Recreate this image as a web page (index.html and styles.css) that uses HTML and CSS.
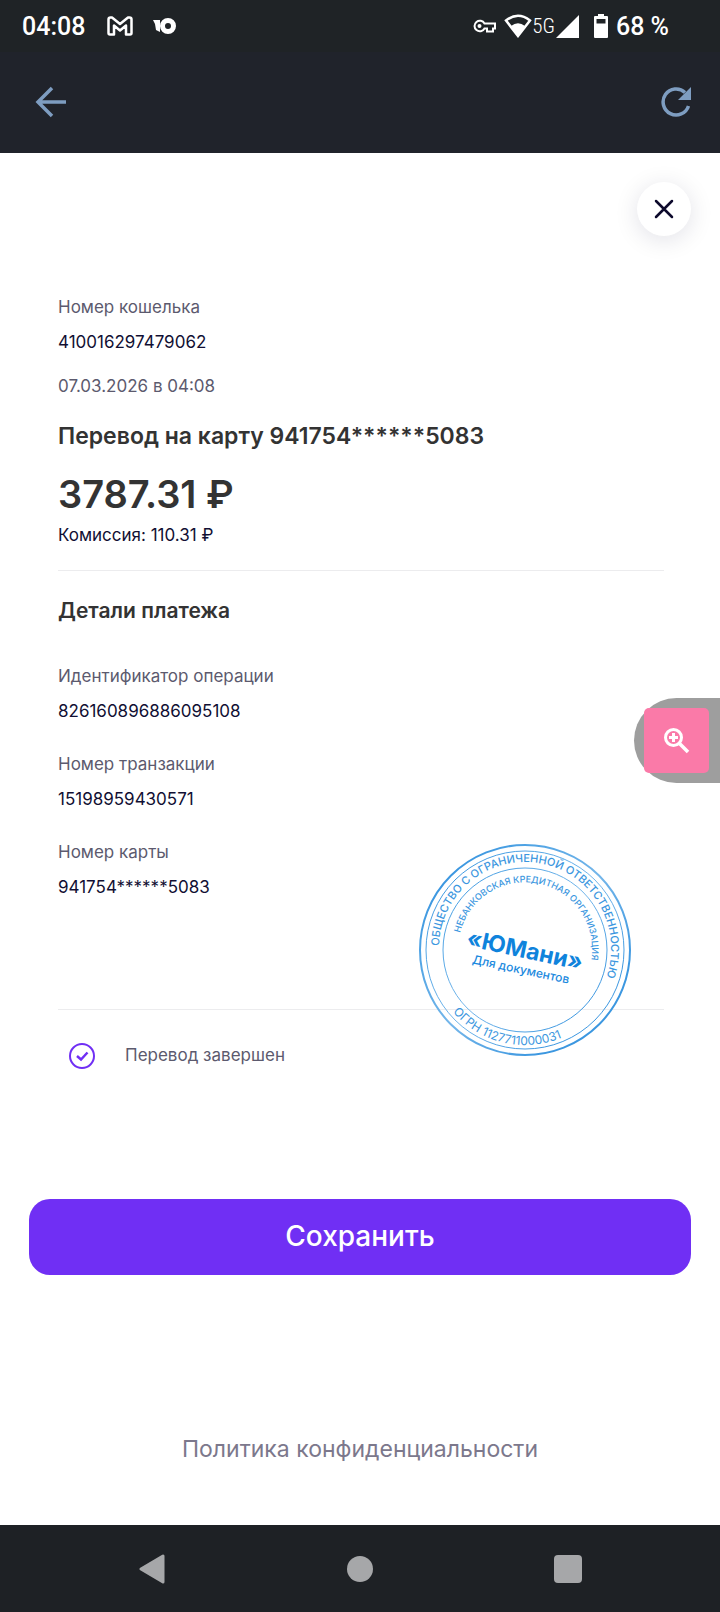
FILE: index.html
```
<!DOCTYPE html>
<html lang="ru">

<head>
    <meta charset="utf-8">
    <meta name="viewport" content="width=device-width, initial-scale=1">
    <title>Перевод на карту</title>
    <link rel="stylesheet" href="styles.css">
</head>

<body>

    <div class="status-bar">
        <span class="time">04:08</span>
        <svg class="icon-mail" width="26" height="20" viewBox="0 0 26 20">
            <path d="M1.500 17V3.500Q1.500 1.500 3.500 1.500H5L13 8L21 1.500H22.500Q24.500 1.500 24.500 3.500V17Q24.500 18.500 23 18.500H19V9.500L13 14.500L7 9.500V18.500H3Q1.500 18.500 1.500 17Z" fill="none" stroke="#fff" stroke-width="2.500" stroke-linejoin="round" />
        </svg>
        <svg class="icon-yoo" width="24" height="16" viewBox="0 0 24 16">
            <path d="M0 2H7V14L3 12L2 6Z" fill="#fff" />
            <circle cx="15" cy="8" r="5.500" fill="none" stroke="#fff" stroke-width="5" />
        </svg>
        <div class="status-right">
            <svg width="23" height="14" viewBox="0 0 23 14">
                <path d="M11.500 4.500A5.300 5.300 0 1 0 11.500 9.500H14V12.500H20V9.500H22V4.500Z" fill="none" stroke="#fff" stroke-width="2" />
                <circle cx="6.500" cy="7" r="2" fill="#fff" />
            </svg>
            <svg class="icon-wifi" width="28" height="24" viewBox="0 0 28 24">
                <path d="M2 6.500Q14 -3 26 6.500L14 22Z" fill="none" stroke="#fff" stroke-width="2.500" />
                <path d="M7 12Q14 6.500 21 12L14 22Z" fill="#fff" />
            </svg>
            <span class="network">5G</span>
            <svg class="icon-signal" width="23" height="23" viewBox="0 0 23 23">
                <path d="M0 23L23 0V23Z" fill="#fff" />
            </svg>
            <svg class="icon-battery" width="14" height="24" viewBox="0 0 14 24">
                <path fill-rule="evenodd" d="M4 0H10V2H13Q14 2 14 3V23Q14 24 13 24H1Q0 24 0 23V3Q0 2 1 2H4ZM2.500 5V9.500H11.500V5Z" fill="#fff" />
            </svg>
            <span class="percent">68 %</span>
        </div>
    </div>

    <header class="app-bar">
        <button type="button" class="bar-button" aria-label="Назад">
            <svg width="32" height="32" viewBox="0 0 32 32">
                <path d="M17 2L3 16L17 30M3 16H31" fill="none" stroke="#7e9dc1" stroke-width="3.500" />
            </svg>
        </button>
        <button type="button" class="bar-button" aria-label="Обновить">
            <svg width="30" height="30" viewBox="0 0 30 30">
                <path d="M27.500 19A13 13 0 1 1 24 5.500" fill="none" stroke="#7e9dc1" stroke-width="3.500" />
                <path d="M30 0V13H17Z" fill="#7e9dc1" />
            </svg>
        </button>
    </header>

    <main>
        <div class="close-row">
            <button type="button" class="close" aria-label="Закрыть">
                <svg width="20" height="20" viewBox="0 0 20 20">
                    <path d="M2 2L18 18M18 2L2 18" stroke="#0d0a2c" stroke-width="2.500" stroke-linecap="round" />
                </svg>
            </button>
        </div>

        <section class="receipt">
            <p class="label">Номер кошелька</p>
            <p class="value">410016297479062</p>
            <p class="label date">07.03.2026 в 04:08</p>
            <h1>Перевод на карту 941754******5083</h1>
            <p class="amount">3787.31 ₽</p>
            <p class="value">Комиссия: 110.31 ₽</p>

            <div class="details">
                <h2>Детали платежа</h2>
                <dl>
                    <div>
                        <dt class="label">Идентификатор операции</dt>
                        <dd class="value">826160896886095108</dd>
                    </div>
                    <div>
                        <dt class="label">Номер транзакции</dt>
                        <dd class="value">15198959430571</dd>
                    </div>
                    <div>
                        <dt class="label">Номер карты</dt>
                        <dd class="value">941754******5083</dd>
                    </div>
                </dl>

                <svg class="stamp" width="214" height="214" viewBox="-107 -107 214 214">
                    <defs>
                        <linearGradient id="ink" gradientUnits="userSpaceOnUse" x1="-75" y1="-75" x2="75" y2="75">
                            <stop offset="0" stop-color="#3c97e0" />
                            <stop offset="0.150" stop-color="#4fa3e4" />
                            <stop offset="0.500" stop-color="#74b6ea" />
                            <stop offset="0.900" stop-color="#3c97e0" />
                            <stop offset="1" stop-color="#3c97e0" />
                        </linearGradient>
                        <path id="outer-arc" d="M-86 -4A86 86 0 0 1 86 0A86 86 0 0 1 70 50" />
                        <path id="inner-arc" d="M-65 -17A67 67 0 0 1 67 0A67 67 0 0 1 58 34" />
                        <path id="bottom-arc" d="M-72 62A95 95 0 0 0 72 62" />
                    </defs>
                    <g fill="none" stroke="url(#ink)">
                        <circle r="105" stroke-width="2" />
                        <circle r="99" stroke-width="1" />
                        <circle r="82" stroke-width="1" />
                    </g>
                    <text class="stamp-outer"><textPath href="#outer-arc">ОБЩЕСТВО С ОГРАНИЧЕННОЙ ОТВЕТСТВЕННОСТЬЮ</textPath></text>
                    <text class="stamp-inner"><textPath href="#inner-arc">НЕБАНКОВСКАЯ КРЕДИТНАЯ ОРГАНИЗАЦИЯ</textPath></text>
                    <text class="stamp-number"><textPath href="#bottom-arc">ОГРН 1127711000031</textPath></text>
                    <g transform="rotate(12)" text-anchor="middle">
                        <text class="stamp-name" y="8">«ЮМани»</text>
                        <text class="stamp-note" y="24">Для документов</text>
                    </g>
                </svg>
            </div>

            <div class="result">
                <svg width="28" height="28" viewBox="0 0 28 28" fill="none" stroke="#702ff4" stroke-width="2">
                    <circle cx="14" cy="14" r="12" />
                    <path d="M9 14L13 17.500L19.500 10.500" stroke-width="2.500" />
                </svg>
                <span>Перевод завершен</span>
            </div>
        </section>

        <button type="button" class="save">Сохранить</button>
        <a class="policy" href="#">Политика конфиденциальности</a>
    </main>

    <nav class="nav-bar">
        <button type="button" aria-label="Назад">
            <svg width="28" height="30" viewBox="0 0 28 30">
                <path d="M3 15L25 2V28Z" fill="#a6a7a9" stroke="#a6a7a9" stroke-width="3" stroke-linejoin="round" />
            </svg>
        </button>
        <button type="button" aria-label="Домой">
            <svg width="26" height="26" viewBox="0 0 26 26">
                <circle cx="13" cy="13" r="13" fill="#a6a7a9" />
            </svg>
        </button>
        <button type="button" aria-label="Недавние">
            <svg width="28" height="28" viewBox="0 0 28 28">
                <rect width="28" height="28" rx="4" fill="#a6a7a9" />
            </svg>
        </button>
    </nav>

    <button type="button" class="magnifier" aria-label="Увеличить">
        <span>
            <svg width="26" height="26" viewBox="0 0 26 26" fill="none" stroke="#fff">
                <circle cx="9.500" cy="9.500" r="8" stroke-width="3" />
                <path d="M15 15L24 24" stroke-width="3.500" />
                <path d="M9.500 5V14M5 9.500H14" stroke-width="3" />
            </svg>
        </span>
    </button>

</body>

</html>
```
FILE: styles.css
```
* {
    box-sizing: border-box;
}

body {
    margin: 0;
    min-height: 100vh;
    display: flex;
    flex-direction: column;
    position: relative;
    background: #fff;
    font-family: Inter, "Liberation Sans", sans-serif;
    font-size: 17px;
}

p, h1, h2, dl, dd {
    margin: 0;
}

svg {
    display: block;
    flex: none;
}

button {
    border: none;
    padding: 0;
    background: none;
    font-family: inherit;
    cursor: pointer;
}

/* phone status bar */
.status-bar {
    display: flex;
    align-items: center;
    height: 52px;
    padding: 0 51px 0 22px;
    background: #1f2326;
    color: #fff;
    font-family: Roboto, sans-serif;
    font-size: 25px;
    font-weight: 500;
}

.icon-mail {
    margin-left: 22px;
}

.icon-yoo {
    margin-left: 20px;
}

.status-right {
    display: flex;
    align-items: center;
    margin-left: auto;
}

.icon-wifi {
    margin-left: 8px;
}

.network {
    font-family: "Roboto Condensed", Roboto, sans-serif;
    font-size: 21px;
    font-weight: 300;
}

.icon-signal {
    margin-left: 1px;
}

.icon-battery {
    margin: 0 8px 0 15px;
}

.app-bar {
    display: flex;
    align-items: center;
    justify-content: space-between;
    height: 101px;
    padding: 0 29px 2px 35px;
    background: #20232b;
}

main {
    flex: 1;
    display: flex;
    flex-direction: column;
    padding: 29px 29px 58px;
}

.close-row {
    display: flex;
    justify-content: flex-end;
}

.close {
    display: grid;
    place-items: center;
    width: 54px;
    height: 54px;
    border-radius: 50%;
    background: #fff;
    box-shadow: 0 4px 24px rgba(20, 20, 60, 0.12);
}

.receipt {
    padding: 54px 27px 0 29px;
}

.label {
    color: #5c5a6e;
    line-height: 35px;
}

.value {
    color: #110f33;
    line-height: 35px;
}

.date {
    margin-top: 9px;
}

h1 {
    margin-top: 14px;
    color: #333;
    font-size: 23px;
    font-weight: 600;
    line-height: 36px;
}

.amount {
    margin-top: 16px;
    color: #333;
    font-size: 38px;
    font-weight: 600;
    line-height: 48px;
}

.details {
    position: relative;
    margin-top: 17px;
    padding: 22px 0 104px;
    border-top: 1px solid #ececee;
    border-bottom: 1px solid #ececee;
}

h2 {
    color: #333;
    font-size: 21px;
    font-weight: 600;
    line-height: 36px;
}

dl {
    display: grid;
    gap: 18px;
    margin-top: 30px;
}

/* round stamp lies over the bottom rule */
.stamp {
    position: absolute;
    right: 32px;
    bottom: -48px;
    fill: #3c97e0;
}

.stamp-outer {
    font-size: 11px;
    font-weight: 500;
}

.stamp-inner {
    font-size: 9px;
    font-weight: 500;
}

.stamp-number {
    font-size: 12px;
}

.stamp-name {
    font-size: 23px;
    font-weight: 700;
    fill: #0f83dc;
}

.stamp-note {
    font-size: 12px;
    font-weight: 500;
    fill: #1b89de;
}

.result {
    display: flex;
    align-items: center;
    gap: 29px;
    padding: 28px 0 0 10px;
    color: #5c5a6e;
    line-height: 35px;
}

.save {
    margin-top: 126px;
    height: 76px;
    padding-bottom: 3px;
    border-radius: 21px;
    background: #702ff4;
    color: #fff;
    font-size: 28px;
    font-weight: 500;
}

.policy {
    margin: 156px auto 0;
    color: #7c788c;
    font-size: 23px;
    line-height: 36px;
    text-decoration: none;
}

.nav-bar {
    display: flex;
    align-items: center;
    justify-content: space-between;
    height: 87px;
    padding: 0 138px;
    background: #1e2125;
}

/* floating accessibility button */
.magnifier {
    position: absolute;
    top: 698px;
    right: 0;
    width: 86px;
    height: 85px;
    padding: 10px;
    border-radius: 43px 0 0 43px;
    background: #9e9e9e;
}

.magnifier span {
    display: grid;
    place-items: center;
    width: 65px;
    height: 65px;
    border-radius: 5px;
    background: #fa7aa8;
}
```
